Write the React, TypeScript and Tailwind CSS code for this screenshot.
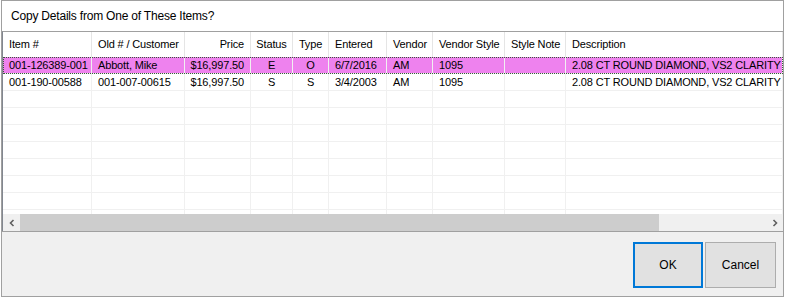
import React from "react";

type Col = { key: string; label: string; w: string; align: "left" | "right" | "center" };

const cols: Col[] = [
  { key: "item", label: "Item #", w: "w-[89px]", align: "left" },
  { key: "old", label: "Old # / Customer", w: "w-[93px]", align: "left" },
  { key: "price", label: "Price", w: "w-[66px]", align: "right" },
  { key: "status", label: "Status", w: "w-[42px]", align: "center" },
  { key: "type", label: "Type", w: "w-[36px]", align: "center" },
  { key: "entered", label: "Entered", w: "w-[58px]", align: "left" },
  { key: "vendor", label: "Vendor", w: "w-[46px]", align: "left" },
  { key: "vstyle", label: "Vendor Style", w: "w-[72px]", align: "left" },
  { key: "note", label: "Style Note", w: "w-[61px]", align: "left" },
  { key: "desc", label: "Description", w: "flex-1", align: "left" },
];

const rows: Record<string, string>[] = [
  {
    item: "001-126389-001",
    old: "Abbott, Mike",
    price: "$16,997.50",
    status: "E",
    type: "O",
    entered: "6/7/2016",
    vendor: "AM",
    vstyle: "1095",
    note: "",
    desc: "2.08 CT ROUND DIAMOND, VS2 CLARITY",
  },
  {
    item: "001-190-00588",
    old: "001-007-00615",
    price: "$16,997.50",
    status: "S",
    type: "S",
    entered: "3/4/2003",
    vendor: "AM",
    vstyle: "1095",
    note: "",
    desc: "2.08 CT ROUND DIAMOND, VS2 CLARITY",
  },
];

const alignCls = (a: Col["align"]) =>
  a === "right" ? "justify-end pr-[6px] pl-[2px]" : a === "center" ? "justify-center" : "justify-start pl-[6px]";

export default function App() {
  const allRows = [...rows, ...Array.from({ length: 8 }, () => ({} as Record<string, string>))];
  return (
    <div
      className="w-[785px] h-[298px] bg-white pl-[1px] overflow-hidden text-black"
      style={{ fontFamily: '"Liberation Sans", Arial, sans-serif' }}
    >
      <div className="w-[783px] h-[297px] border border-[#a0a0a0] flex flex-col">
        {/* title */}
        <div className="h-[30px] shrink-0 flex items-center pl-[9px] text-[12px] tracking-[-0.2px] bg-white">
          Copy Details from One of These Items?
        </div>
        {/* grid */}
        <div className="h-[200px] shrink-0 border-t border-[#a0a0a0] border-l border-l-[#828790] flex flex-col bg-white text-[11px] tracking-[-0.15px] overflow-hidden">
          <div className="flex-1 overflow-hidden">
            {/* header */}
            <div className="flex h-[25px]">
              {cols.map((c) => (
                <div
                  key={c.key}
                  className={`${c.w} shrink-0 h-full flex items-center border-r border-[#e5e5e5] whitespace-nowrap overflow-hidden ${alignCls(c.align)}`}
                >
                  {c.label}
                </div>
              ))}
            </div>
            {allRows.map((r, i) => (
              <div
                key={i}
                className={`relative flex h-[17px] border-b border-[#f0f0f0] ${i === 0 ? "bg-[#ee82ee]" : ""}`}
              >
                {cols.map((c) => (
                  <div
                    key={c.key}
                    className={`${c.w} shrink-0 h-full flex items-center border-r border-[#f0f0f0] whitespace-nowrap overflow-hidden ${alignCls(c.align)}`}
                  >
                    {r[c.key] ?? ""}
                  </div>
                ))}
                {i === 0 && (
                  <div className="absolute left-0 right-0 top-0 bottom-[-1px] border border-dotted border-[#3a5a3a] pointer-events-none" />
                )}
              </div>
            ))}
          </div>
          {/* horizontal scrollbar */}
          <div className="h-[17px] shrink-0 flex bg-[#f0f0f0]">
            <div className="w-[17px] h-full flex items-center justify-center">
              <svg width="8" height="8" viewBox="0 0 8 8">
                <path d="M5.5 1 L2.5 4 L5.5 7" stroke="#606060" strokeWidth="1.6" fill="none" />
              </svg>
            </div>
            <div className="flex-1 flex h-full">
              <div className="w-[639px] h-full bg-[#cdcdcd]" />
            </div>
            <div className="w-[17px] h-full flex items-center justify-center">
              <svg width="8" height="8" viewBox="0 0 8 8">
                <path d="M2.5 1 L5.5 4 L2.5 7" stroke="#606060" strokeWidth="1.6" fill="none" />
              </svg>
            </div>
          </div>
        </div>
        {/* footer */}
        <div className="flex-1 bg-[#f0f0f0] border-t border-[#a0a0a0] flex justify-end items-start pt-[10px] pr-[7px] gap-[2px] text-[12px]">
          <button className="w-[70px] h-[46px] bg-[#e1e1e1] border-2 border-[#0078d7] flex items-center justify-center">
            OK
          </button>
          <button className="w-[71px] h-[46px] bg-[#e1e1e1] border border-[#adadad] flex items-center justify-center">
            Cancel
          </button>
        </div>
      </div>
    </div>
  );
}
